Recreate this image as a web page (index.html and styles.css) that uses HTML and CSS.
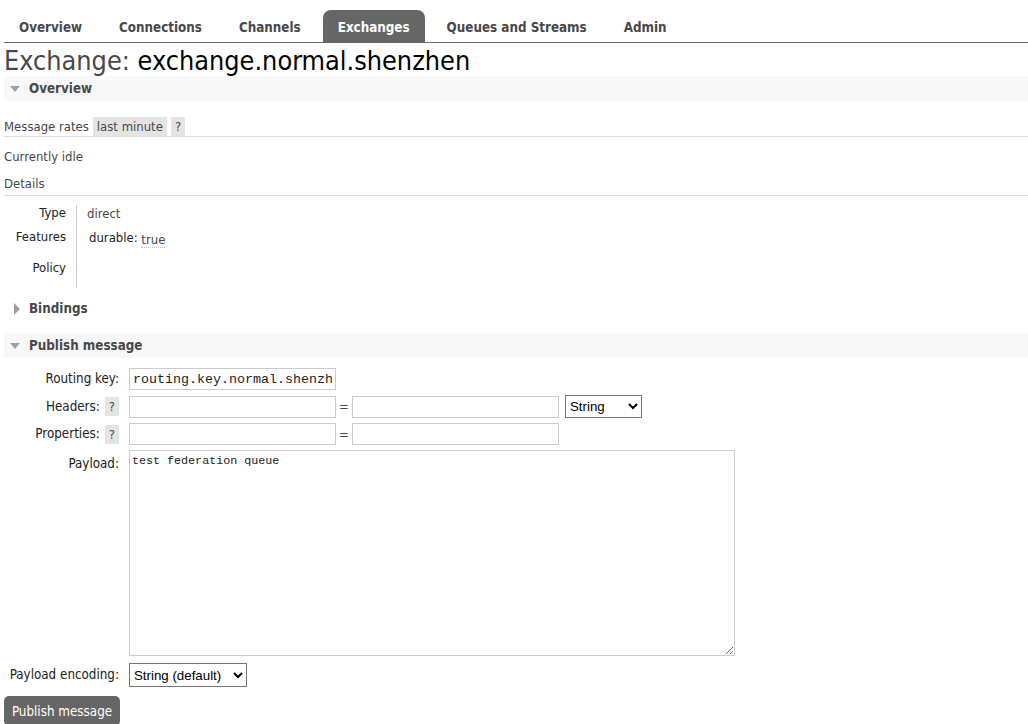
FILE: index.html
```html
<!DOCTYPE html>
<html>
<head>
<meta charset="utf-8">
<title>RabbitMQ Management</title>
<link rel="stylesheet" href="styles.css">
</head>
<body>
<nav class="tabs">
  <ul>
    <li><a>Overview</a></li>
    <li><a>Connections</a></li>
    <li><a>Channels</a></li>
    <li class="active"><a>Exchanges</a></li>
    <li><a>Queues and Streams</a></li>
    <li><a>Admin</a></li>
  </ul>
</nav>
<main class="main">
  <h1><span class="h1-label">Exchange:</span> <span class="h1-name">exchange.normal.shenzhen</span></h1>

  <section class="section">
    <h2 class="section-head open"><span class="tri-down"></span>Overview</h2>
    <div class="rates">
      <span>Message rates</span>
      <span class="pill">last minute</span>
      <span class="help">?</span>
    </div>
    <p class="idle">Currently idle</p>
    <h3 class="sub">Details</h3>
    <table class="facts">
      <tr><th>Type</th><td>direct</td></tr>
      <tr><th>Features</th><td><span class="feat-key">durable:</span> <abbr class="feat-val">true</abbr></td></tr>
      <tr class="policy"><th>Policy</th><td></td></tr>
    </table>
  </section>

  <section class="section">
    <h2 class="section-head closed"><span class="tri-right"></span>Bindings</h2>
  </section>

  <section class="section">
    <h2 class="section-head open"><span class="tri-down"></span>Publish message</h2>
    <form class="publish">
      <label class="lbl">Routing key:</label>
      <div class="ctl"><input class="txt" type="text" value="routing.key.normal.shenzhen"></div>

      <label class="lbl">Headers: <span class="help">?</span></label>
      <div class="ctl">
        <input class="txt" type="text">
        <span class="eq">=</span>
        <input class="txt" type="text">
        <select class="sel sel-type"><option>String</option></select>
      </div>

      <label class="lbl">Properties: <span class="help">?</span></label>
      <div class="ctl">
        <input class="txt" type="text">
        <span class="eq">=</span>
        <input class="txt" type="text">
      </div>

      <label class="lbl lbl-top">Payload:</label>
      <div class="ctl"><textarea class="payload">test federation queue</textarea></div>

      <label class="lbl lbl-enc">Payload encoding:</label>
      <div class="ctl ctl-enc"><select class="sel sel-enc"><option>String (default)</option></select></div>

      <div class="submit-row"><button type="button" class="btn">Publish message</button></div>
    </form>
  </section>
</main>
</body>
</html>
```

FILE: styles.css
```css
html, body {
  margin: 0;
  padding: 0;
  background: #fff;
}
body {
  font-family: "DejaVu Sans Condensed", "DejaVu Sans", sans-serif;
  font-size: 13px;
  color: #484848;
}

/* tabs */
.tabs {
  padding: 10px 0 0 8px;
}
.tabs ul {
  list-style: none;
  margin: 0 0 0 -4px;
  padding: 0;
  display: flex;
  gap: 7px;
  border-bottom: 1px solid #666;
}
.tabs li a {
  display: block;
  line-height: 28px;
  padding: 4px 15px 0 15px;
  font-weight: bold;
  font-size: 13.3px;
  color: #484848;
  border-radius: 8px 8px 0 0;
}
.tabs li.active a {
  background: #666;
  color: #fff;
}

.main {
  padding: 0 0 0 4px;
}

h1 {
  margin: 0;
  padding-top: 3px;
  font-size: 26.8px;
  font-weight: normal;
  line-height: 30px;
  color: #000;
}
.h1-label {
  color: #484848;
}

.section-head {
  margin: 0;
  height: 25px;
  line-height: 25px;
  font-size: 13.3px;
  font-weight: bold;
  color: #484848;
  display: flex;
  align-items: center;
}
.section-head.open {
  background: #f8f8f8;
}
.section-head.closed {
  margin: 8px 0 12px 0;
}
.tri-down {
  width: 0;
  height: 0;
  border-left: 5px solid transparent;
  border-right: 5px solid transparent;
  border-top: 6px solid #a0a0a0;
  margin: 1px 9px 0 6px;
}
.tri-right {
  width: 0;
  height: 0;
  border-top: 6px solid transparent;
  border-bottom: 6px solid transparent;
  border-left: 6px solid #a0a0a0;
  margin: 0 9px 0 10px;
}

.rates {
  margin-top: 16px;
  display: flex;
  align-items: center;
  gap: 4px;
  height: 19px;
  border-bottom: 1px solid #ddd;
}
.pill {
  background: #e4e4e4;
  padding: 0 4px;
  line-height: 19px;
}
.help {
  display: inline-block;
  background: #e4e4e4;
  padding: 0 4px;
  line-height: 19px;
  color: #484848;
  font-weight: normal;
}

.idle {
  margin: 11px 0 0 0;
  line-height: 17px;
}
.sub {
  margin: 10px 0 0 0;
  font-size: 13px;
  font-weight: normal;
  line-height: 17px;
  padding-bottom: 3px;
  border-bottom: 1px solid #ddd;
}

.facts {
  border-collapse: collapse;
  margin-top: 9px;
  margin-left: 4px;
}
.facts th {
  text-align: right;
  font-weight: normal;
  color: #222;
  padding: 0 10px 0 0;
  border-right: 1px solid #ccc;
  width: 58px;
  height: 24px;
  vertical-align: top;
  line-height: 15px;
}
.facts td {
  padding: 1px 0 0 10px;
  vertical-align: top;
  line-height: 15px;
}
.facts tr.policy th {
  height: 28px;
  padding-top: 7px;
}
.feat-key {
  color: #222;
  padding-left: 2px;
}
.feat-val {
  text-decoration: none;
  border-bottom: 1px dotted #bbb;
  position: relative;
  top: 2px;
}

/* publish form */
.publish {
  display: grid;
  grid-template-columns: 115px 1fr;
  column-gap: 10px;
  row-gap: 5px;
  margin-top: 10px;
}
.lbl {
  text-align: right;
  color: #222;
  font-size: 13.3px;
  line-height: 22px;
  display: flex;
  justify-content: flex-end;
  align-items: center;
  gap: 5px;
  white-space: nowrap;
}
.lbl .help {
  line-height: 19px;
  padding: 0 4px;
  font-size: 13px;
}
.lbl-top {
  align-items: flex-start;
  padding-top: 3px;
}
.lbl-enc,
.ctl-enc {
  margin-top: 2px;
}
.ctl {
  display: flex;
  align-items: center;
}
.txt {
  box-sizing: border-box;
  width: 207px;
  height: 22px;
  border: 1px solid #ccc;
  padding: 0 3px;
  font-family: "Liberation Mono", monospace;
  font-size: 13.33px;
  color: #222;
  margin: 0;
  background: #fff;
}
.eq {
  width: 16px;
  text-align: center;
  color: #484848;
}
.sel {
  box-sizing: border-box;
  height: 23px;
  font-family: "Liberation Sans", Arial, sans-serif;
  font-size: 13.3px;
  color: #000;
  border: 1px solid #767676;
  border-radius: 0;
  background: #fff;
  margin: 0;
}
.sel-type {
  width: 77px;
  margin-left: 6px;
}
.sel-enc {
  width: 118px;
  height: 24px;
}
.payload {
  box-sizing: border-box;
  width: 606px;
  height: 206px;
  border: 1px solid #ccc;
  padding: 3px 2px;
  font-family: "Liberation Mono", monospace;
  font-size: 11.7px;
  color: #222;
  margin: 0;
  resize: both;
}
.submit-row {
  grid-column: 1 / 3;
  margin-top: 4px;
}
.btn {
  background: #666;
  color: #fff;
  border: none;
  border-radius: 5px;
  font-family: "DejaVu Sans Condensed", "DejaVu Sans", sans-serif;
  font-size: 13.3px;
  height: 30px;
  width: 116px;
  padding: 0;
  cursor: pointer;
}
```
